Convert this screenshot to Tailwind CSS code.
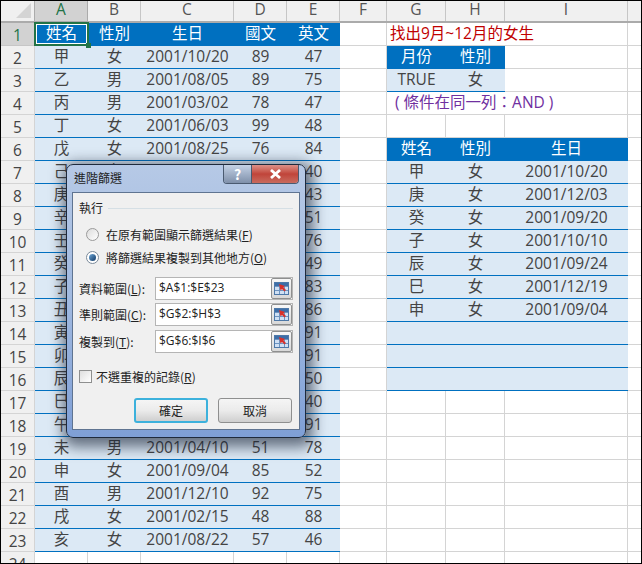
<!doctype html>
<html>
<head>
<meta charset="utf-8">
<script src="https://cdn.jsdelivr.net/npm/@tailwindcss/browser@4"></script>
</head>
<body class="m-0 bg-white">
<div class="relative w-[642px] h-[564px] overflow-hidden border border-black bg-white text-[15.5px] text-[#444] font-['Open_Sans','Noto_Sans_CJK_TC',sans-serif]">

  <!-- column headers -->
  <div class="flex h-[22px] bg-[#f0f0f0] border-b-2 border-[#ababab] text-[#555] leading-[17px]">
    <div class="w-[34px] shrink-0 border-r border-[#ababab] relative"><div class="absolute right-[3px] bottom-[3px] w-0 h-0 border-l-[15px] border-l-transparent border-b-[15px] border-b-[#d4d4d4]"></div></div>
    <div class="w-[53px] text-center bg-[#d2d2d2] text-[#217346] border-r border-[#ababab]">A</div>
    <div class="w-[53px] text-center border-r border-[#c6c6c6]">B</div>
    <div class="w-[93px] text-center border-r border-[#c6c6c6]">C</div>
    <div class="w-[53px] text-center border-r border-[#c6c6c6]">D</div>
    <div class="w-[53px] text-center border-r border-[#c6c6c6]">E</div>
    <div class="w-[47px] text-center border-r border-[#c6c6c6]">F</div>
    <div class="w-[59px] text-center border-r border-[#c6c6c6]">G</div>
    <div class="w-[59px] text-center border-r border-[#c6c6c6]">H</div>
    <div class="w-[123px] text-center border-r border-[#c6c6c6]">I</div>
    <div class="flex-1"></div>
  </div>

  <!-- row 1 -->
  <div class="flex h-[23px] leading-[21px]">
    <div class="w-[34px] shrink-0 bg-[#d2d2d2] text-[#217346] text-center border-r border-[#ababab] border-b border-[#c6c6c6] pt-[2px]">1</div>
    <div class="w-[53px] bg-[#0070c0] text-white text-center relative">姓名<div class="absolute -left-[1px] -top-[1px] w-[55px] h-[24px] border-2 border-[#217346] outline outline-white -outline-offset-3"></div><div class="absolute -right-[3px] -bottom-[2px] w-[5px] h-[5px] bg-[#217346] z-10"></div></div>
    <div class="w-[53px] bg-[#0070c0] text-white text-center">性別</div>
    <div class="w-[93px] bg-[#0070c0] text-white text-center">生日</div>
    <div class="w-[53px] bg-[#0070c0] text-white text-center">國文</div>
    <div class="w-[53px] bg-[#0070c0] text-white text-center">英文</div>
    <div class="w-[47px] border-r border-b border-[#d4d4d4]"></div>
    <div class="w-[241px] border-r border-b border-[#d4d4d4] pl-[3px] text-[#c00000] whitespace-nowrap">找出9月~12月的女生</div>
    <div class="flex-1 border-b border-[#d4d4d4]"></div>
  </div>

  <!-- row 2 -->
  <div class="flex h-[23px] leading-[21px]">
    <div class="w-[34px] shrink-0 bg-[#f0f0f0] text-center border-r border-[#ababab] border-b border-[#d4d4d4] pt-[2px]">2</div>
    <div class="w-[53px] bg-[#dce9f5] text-center border-b border-[#0070c0]">甲</div>
    <div class="w-[53px] bg-[#dce9f5] text-center border-b border-[#0070c0]">女</div>
    <div class="w-[93px] bg-[#dce9f5] text-center border-b border-[#0070c0]">2001/10/20</div>
    <div class="w-[53px] bg-[#dce9f5] text-center border-b border-[#0070c0]">89</div>
    <div class="w-[53px] bg-[#dce9f5] text-center border-b border-[#0070c0]">47</div>
    <div class="w-[47px] border-r border-b border-[#d4d4d4]"></div>
    <div class="w-[59px] bg-[#0070c0] text-white text-center">月份</div>
    <div class="w-[59px] bg-[#0070c0] text-white text-center">性別</div>
    <div class="w-[123px] border-r border-b border-[#d4d4d4]"></div>
    <div class="flex-1 border-b border-[#d4d4d4]"></div>
  </div>

  <!-- row 3 -->
  <div class="flex h-[23px] leading-[21px]">
    <div class="w-[34px] shrink-0 bg-[#f0f0f0] text-center border-r border-[#ababab] border-b border-[#d4d4d4] pt-[2px]">3</div>
    <div class="w-[53px] bg-[#dce9f5] text-center border-b border-[#0070c0]">乙</div>
    <div class="w-[53px] bg-[#dce9f5] text-center border-b border-[#0070c0]">男</div>
    <div class="w-[93px] bg-[#dce9f5] text-center border-b border-[#0070c0]">2001/08/05</div>
    <div class="w-[53px] bg-[#dce9f5] text-center border-b border-[#0070c0]">89</div>
    <div class="w-[53px] bg-[#dce9f5] text-center border-b border-[#0070c0]">75</div>
    <div class="w-[47px] border-r border-b border-[#d4d4d4]"></div>
    <div class="w-[59px] bg-[#dce9f5] text-center border-b border-[#0070c0]">TRUE</div>
    <div class="w-[59px] bg-[#dce9f5] text-center border-b border-[#0070c0]">女</div>
    <div class="w-[123px] border-r border-b border-[#d4d4d4]"></div>
    <div class="flex-1 border-b border-[#d4d4d4]"></div>
  </div>

  <!-- row 4 -->
  <div class="flex h-[23px] leading-[21px]">
    <div class="w-[34px] shrink-0 bg-[#f0f0f0] text-center border-r border-[#ababab] border-b border-[#d4d4d4] pt-[2px]">4</div>
    <div class="w-[53px] bg-[#dce9f5] text-center border-b border-[#0070c0]">丙</div>
    <div class="w-[53px] bg-[#dce9f5] text-center border-b border-[#0070c0]">男</div>
    <div class="w-[93px] bg-[#dce9f5] text-center border-b border-[#0070c0]">2001/03/02</div>
    <div class="w-[53px] bg-[#dce9f5] text-center border-b border-[#0070c0]">78</div>
    <div class="w-[53px] bg-[#dce9f5] text-center border-b border-[#0070c0]">47</div>
    <div class="w-[47px] border-r border-b border-[#d4d4d4]"></div>
    <div class="w-[241px] border-r border-b border-[#d4d4d4] pl-[8px] text-[#7030a0] whitespace-nowrap">( 條件在同一列：AND )</div>
    <div class="flex-1 border-b border-[#d4d4d4]"></div>
  </div>

  <!-- row 5 -->
  <div class="flex h-[23px] leading-[21px]">
    <div class="w-[34px] shrink-0 bg-[#f0f0f0] text-center border-r border-[#ababab] border-b border-[#d4d4d4] pt-[2px]">5</div>
    <div class="w-[53px] bg-[#dce9f5] text-center border-b border-[#0070c0]">丁</div>
    <div class="w-[53px] bg-[#dce9f5] text-center border-b border-[#0070c0]">女</div>
    <div class="w-[93px] bg-[#dce9f5] text-center border-b border-[#0070c0]">2001/06/03</div>
    <div class="w-[53px] bg-[#dce9f5] text-center border-b border-[#0070c0]">99</div>
    <div class="w-[53px] bg-[#dce9f5] text-center border-b border-[#0070c0]">48</div>
    <div class="w-[47px] border-r border-b border-[#d4d4d4]"></div>
    <div class="w-[59px] border-r border-b border-[#d4d4d4]"></div>
    <div class="w-[59px] border-r border-b border-[#d4d4d4]"></div>
    <div class="w-[123px] border-r border-b border-[#d4d4d4]"></div>
    <div class="flex-1 border-b border-[#d4d4d4]"></div>
  </div>

  <!-- row 6 -->
  <div class="flex h-[23px] leading-[21px]">
    <div class="w-[34px] shrink-0 bg-[#f0f0f0] text-center border-r border-[#ababab] border-b border-[#d4d4d4] pt-[2px]">6</div>
    <div class="w-[53px] bg-[#dce9f5] text-center border-b border-[#0070c0]">戊</div>
    <div class="w-[53px] bg-[#dce9f5] text-center border-b border-[#0070c0]">女</div>
    <div class="w-[93px] bg-[#dce9f5] text-center border-b border-[#0070c0]">2001/08/25</div>
    <div class="w-[53px] bg-[#dce9f5] text-center border-b border-[#0070c0]">76</div>
    <div class="w-[53px] bg-[#dce9f5] text-center border-b border-[#0070c0]">84</div>
    <div class="w-[47px] border-r border-b border-[#d4d4d4]"></div>
    <div class="w-[59px] bg-[#0070c0] text-white text-center">姓名</div>
    <div class="w-[59px] bg-[#0070c0] text-white text-center">性別</div>
    <div class="w-[123px] bg-[#0070c0] text-white text-center">生日</div>
    <div class="flex-1 border-b border-[#d4d4d4]"></div>
  </div>

  <div id="rows"></div>

  <!-- advanced filter dialog -->
  <div class="absolute left-[65px] top-[163px] w-[240px] h-[274px] rounded-[7px] border border-[#1f2a3c] bg-gradient-to-b from-[#b6c9e6] via-[#a0b9e0] to-[#7f9fd6] shadow-[2px_4px_14px_5px_rgba(20,30,50,0.6)] px-[5px] pb-[7px] flex flex-col text-[#222] text-[12px] font-['Noto_Sans_CJK_TC','Noto_Sans',sans-serif]">
    <div class="h-[27px] shrink-0 flex justify-between">
      <div class="pl-[2px] pt-[4px] leading-[18px]">進階篩選</div>
      <div class="flex h-[19px] mr-[1px] rounded-b-[4px] border border-t-0 border-[#4a5a70] overflow-hidden">
        <div class="w-[28px] flex items-center justify-center bg-gradient-to-b from-[#c4d2e6] to-[#7f90aa] border-r border-[#4a5a70] text-white font-bold text-[14px] leading-none">?</div>
        <div class="w-[46px] flex items-center justify-center bg-gradient-to-b from-[#dc9088] via-[#c0443a] to-[#c86a5e]">
          <svg width="13" height="10" viewBox="0 0 13 10"><path d="M2 1l9 8M11 1l-9 8" stroke="#fff" stroke-width="2.800" fill="none"/></svg>
        </div>
      </div>
    </div>
    <div class="flex-1 bg-[#f0f0f0] border border-[#5f7491] px-[6px] flex flex-col">
      <div class="flex items-center h-[30px]">
        <span class="leading-none">執行</span>
        <div class="flex-1 h-[1px] bg-[#d5dfe5] ml-[5px]"></div>
      </div>
      <div class="flex items-center gap-[7px] pl-[7px] mt-[2px] h-[19px]">
        <div class="w-[13px] h-[13px] rounded-full border border-[#9a9a9a] bg-gradient-to-br from-[#dcdcdc] to-white"></div>
        <span>在原有範圍顯示篩選結果(<span class="underline">F</span>)</span>
      </div>
      <div class="flex items-center gap-[7px] pl-[7px] mt-[4px] h-[19px]">
        <div class="w-[13px] h-[13px] rounded-full border border-[#7a8a9a] bg-white flex items-center justify-center"><div class="w-[7px] h-[7px] rounded-full bg-gradient-to-br from-[#6fa8d8] to-[#123a66]"></div></div>
        <span>將篩選結果複製到其他地方(<span class="underline">O</span>)</span>
      </div>
      <div class="flex items-center h-[23px] mt-[10px]">
        <span class="w-[76px] shrink-0">資料範圍(<span class="underline">L</span>):</span>
        <div class="w-[138px] h-[23px] bg-white border border-[#b5b5b5] pl-[3px] leading-[20px] font-['Open_Sans'] flex justify-between">$A$1:$E$23<div class="w-[21px] h-[21px] bg-gradient-to-b from-[#f8f8f8] to-[#d8d8d8] border border-[#8e8f8f] rounded-[2px] ml-auto shrink-0 flex items-center justify-center"><svg width="15" height="13" viewBox="0 0 15 13"><rect x="0.5" y="0.5" width="14" height="12" fill="#cfe0f4" stroke="#4d78a8"/><path d="M1 4.500h13M1 8.500h13M5.500 1v11M10.500 1v11" stroke="#6d94c0"/><rect x="1" y="1" width="13" height="3" fill="#3d6ea8"/><path d="M5 2l6 2-1.500 1.500 2.500 2.500-1.500 1.500-2.500-2.500-1.500 1.500z" fill="#d8312a"/></svg></div></div>
      </div>
      <div class="flex items-center h-[23px] mt-[3px]">
        <span class="w-[76px] shrink-0">準則範圍(<span class="underline">C</span>):</span>
        <div class="w-[138px] h-[23px] bg-white border border-[#b5b5b5] pl-[3px] leading-[20px] font-['Open_Sans'] flex justify-between">$G$2:$H$3<div class="w-[21px] h-[21px] bg-gradient-to-b from-[#f8f8f8] to-[#d8d8d8] border border-[#8e8f8f] rounded-[2px] ml-auto shrink-0 flex items-center justify-center"><svg width="15" height="13" viewBox="0 0 15 13"><rect x="0.5" y="0.5" width="14" height="12" fill="#cfe0f4" stroke="#4d78a8"/><path d="M1 4.500h13M1 8.500h13M5.500 1v11M10.500 1v11" stroke="#6d94c0"/><rect x="1" y="1" width="13" height="3" fill="#3d6ea8"/><path d="M5 2l6 2-1.500 1.500 2.500 2.500-1.500 1.500-2.500-2.500-1.500 1.500z" fill="#d8312a"/></svg></div></div>
      </div>
      <div class="flex items-center h-[23px] mt-[4px]">
        <span class="w-[76px] shrink-0">複製到(<span class="underline">T</span>):</span>
        <div class="w-[138px] h-[23px] bg-white border border-[#b5b5b5] pl-[3px] leading-[20px] font-['Open_Sans'] flex justify-between">$G$6:$I$6<div class="w-[21px] h-[21px] bg-gradient-to-b from-[#f8f8f8] to-[#d8d8d8] border border-[#8e8f8f] rounded-[2px] ml-auto shrink-0 flex items-center justify-center"><svg width="15" height="13" viewBox="0 0 15 13"><rect x="0.5" y="0.5" width="14" height="12" fill="#cfe0f4" stroke="#4d78a8"/><path d="M1 4.500h13M1 8.500h13M5.500 1v11M10.500 1v11" stroke="#6d94c0"/><rect x="1" y="1" width="13" height="3" fill="#3d6ea8"/><path d="M5 2l6 2-1.500 1.500 2.500 2.500-1.500 1.500-2.500-2.500-1.500 1.500z" fill="#d8312a"/></svg></div></div>
      </div>
      <div class="flex items-center gap-[4px] mt-[14px] h-[19px]">
        <div class="w-[13px] h-[13px] border border-[#8e8f8f] bg-gradient-to-br from-[#dedede] to-white"></div>
        <span>不選重複的記錄(<span class="underline">R</span>)</span>
      </div>
      <div class="flex justify-end gap-[10px] mt-[12px] pr-[1px]">
        <div class="w-[74px] h-[25px] rounded-[3px] border-2 border-[#3cb1dc] bg-gradient-to-b from-[#f5f5f5] via-[#ebebeb] to-[#cfcfcf] text-center leading-[21px]">確定</div>
        <div class="w-[74px] h-[25px] rounded-[3px] border border-[#8e8f8f] bg-gradient-to-b from-[#f5f5f5] via-[#ebebeb] to-[#cfcfcf] text-center leading-[23px]">取消</div>
      </div>
    </div>
  </div>
</div>

<script>
var data = [
  ['己','女','2001/01/16','76','40'],
  ['庚','女','2001/12/03','64','43'],
  ['辛','男','2001/05/11','80','51'],
  ['壬','男','2001/07/21','62','76'],
  ['癸','女','2001/09/20','71','49'],
  ['子','女','2001/10/10','59','83'],
  ['丑','男','2001/02/27','88','86'],
  ['寅','男','2001/04/18','73','91'],
  ['卯','男','2001/06/29','95','91'],
  ['辰','女','2001/09/24','66','50'],
  ['巳','女','2001/12/19','82','40'],
  ['午','男','2001/03/14','77','91'],
  ['未','男','2001/04/10','51','78'],
  ['申','女','2001/09/04','85','52'],
  ['酉','男','2001/12/10','92','75'],
  ['戌','女','2001/02/15','48','88'],
  ['亥','女','2001/08/22','57','46'],
  null
];
var right = [
  ['甲','女','2001/10/20'],['庚','女','2001/12/03'],['癸','女','2001/09/20'],['子','女','2001/10/10'],
  ['辰','女','2001/09/24'],['巳','女','2001/12/19'],['申','女','2001/09/04'],['','',''],['','',''],['','','']
];
var dataCls = 'bg-[#dce9f5] text-center border-b border-[#0070c0]';
var plainCls = 'border-r border-b border-[#d4d4d4]';
var widths = ['w-[53px]','w-[53px]','w-[93px]','w-[53px]','w-[53px]'];
var rWidths = ['w-[59px]','w-[59px]','w-[123px]'];
var html = '';
data.forEach(function (row, i) {
  var n = i + 7;
  html += '<div class="flex h-[23px] leading-[21px]">';
  html += '<div class="w-[34px] shrink-0 bg-[#f0f0f0] text-center border-r border-[#ababab] border-b border-[#d4d4d4] pt-[2px]">' + n + '</div>';
  widths.forEach(function (w, c) {
    html += row ? '<div class="' + w + ' ' + dataCls + '">' + row[c] + '</div>' : '<div class="' + w + ' ' + plainCls + '"></div>';
  });
  html += '<div class="w-[47px] ' + plainCls + '"></div>';
  rWidths.forEach(function (w, c) {
    html += right[i] ? '<div class="' + w + ' ' + dataCls + '">' + right[i][c] + '</div>' : '<div class="' + w + ' ' + plainCls + '"></div>';
  });
  html += '<div class="flex-1 border-b border-[#d4d4d4]"></div></div>';
});
document.getElementById('rows').innerHTML = html;
</script>
</body>
</html>
